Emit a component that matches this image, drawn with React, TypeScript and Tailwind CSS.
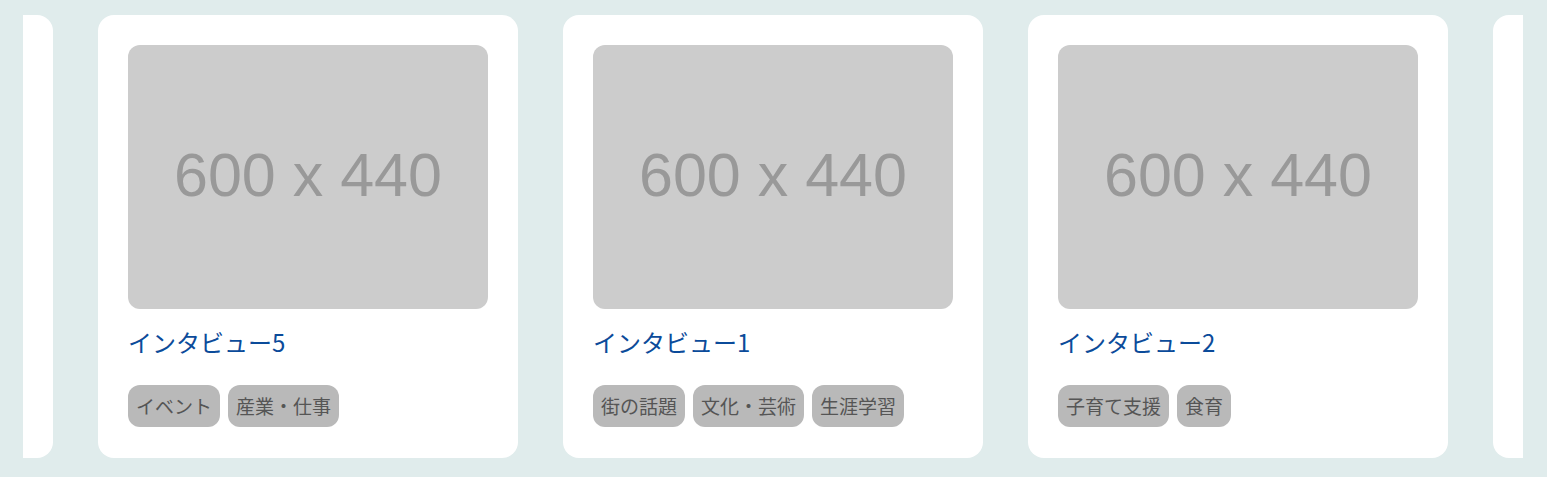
import React from 'react';

interface Interview {
  id: number;
  title: string;
  tags: string[];
}

const interviews: Interview[] = [
  { id: 4, title: 'インタビュー4', tags: ['まちづくり'] },
  { id: 5, title: 'インタビュー5', tags: ['イベント', '産業・仕事'] },
  { id: 1, title: 'インタビュー1', tags: ['街の話題', '文化・芸術', '生涯学習'] },
  { id: 2, title: 'インタビュー2', tags: ['子育て支援', '食育'] },
  { id: 3, title: 'インタビュー3', tags: ['福祉'] },
];

function Placeholder() {
  return (
    <div className="w-[360px] h-[264px] rounded-xl bg-[#cccccc] flex items-center justify-center">
      <span className="text-[61px] text-[#999999] font-['Liberation_Sans',Arial,sans-serif] leading-none pb-[3px]">
        600 x 440
      </span>
    </div>
  );
}

function Card({ item, peek }: { item: Interview; peek: boolean }) {
  return (
    <div className="w-[420px] shrink-0 bg-white rounded-2xl pt-[30px] px-[30px] pb-[31px]">
      {/* slides that only peek in at the edges show just their white frame */}
      <div className={peek ? 'invisible' : ''}>
        <Placeholder />
        <h3 className="mt-[17px] text-[24px] leading-8 text-[#0b4b9a]">{item.title}</h3>
        <div className="mt-[27px] flex gap-2">
          {item.tags.map((tag) => (
            <span
              key={tag}
              className="h-[42px] px-2 flex items-center rounded-xl bg-[#b9b9b9] text-[19px] text-[#555555]"
            >
              {tag}
            </span>
          ))}
        </div>
      </div>
    </div>
  );
}

export default function App() {
  return (
    <div className="w-[1547px] h-[477px] bg-[#e0ecec] pt-[15px] pl-[23px] font-['Noto_Sans_CJK_JP','Noto_Sans',sans-serif]">
      {/* slider viewport */}
      <div className="w-[1500px] overflow-hidden">
        <div className="flex gap-[45px] -ml-[390px]">
          {interviews.map((item, i) => (
            <Card key={item.id} item={item} peek={i === 0 || i === interviews.length - 1} />
          ))}
        </div>
      </div>
    </div>
  );
}
